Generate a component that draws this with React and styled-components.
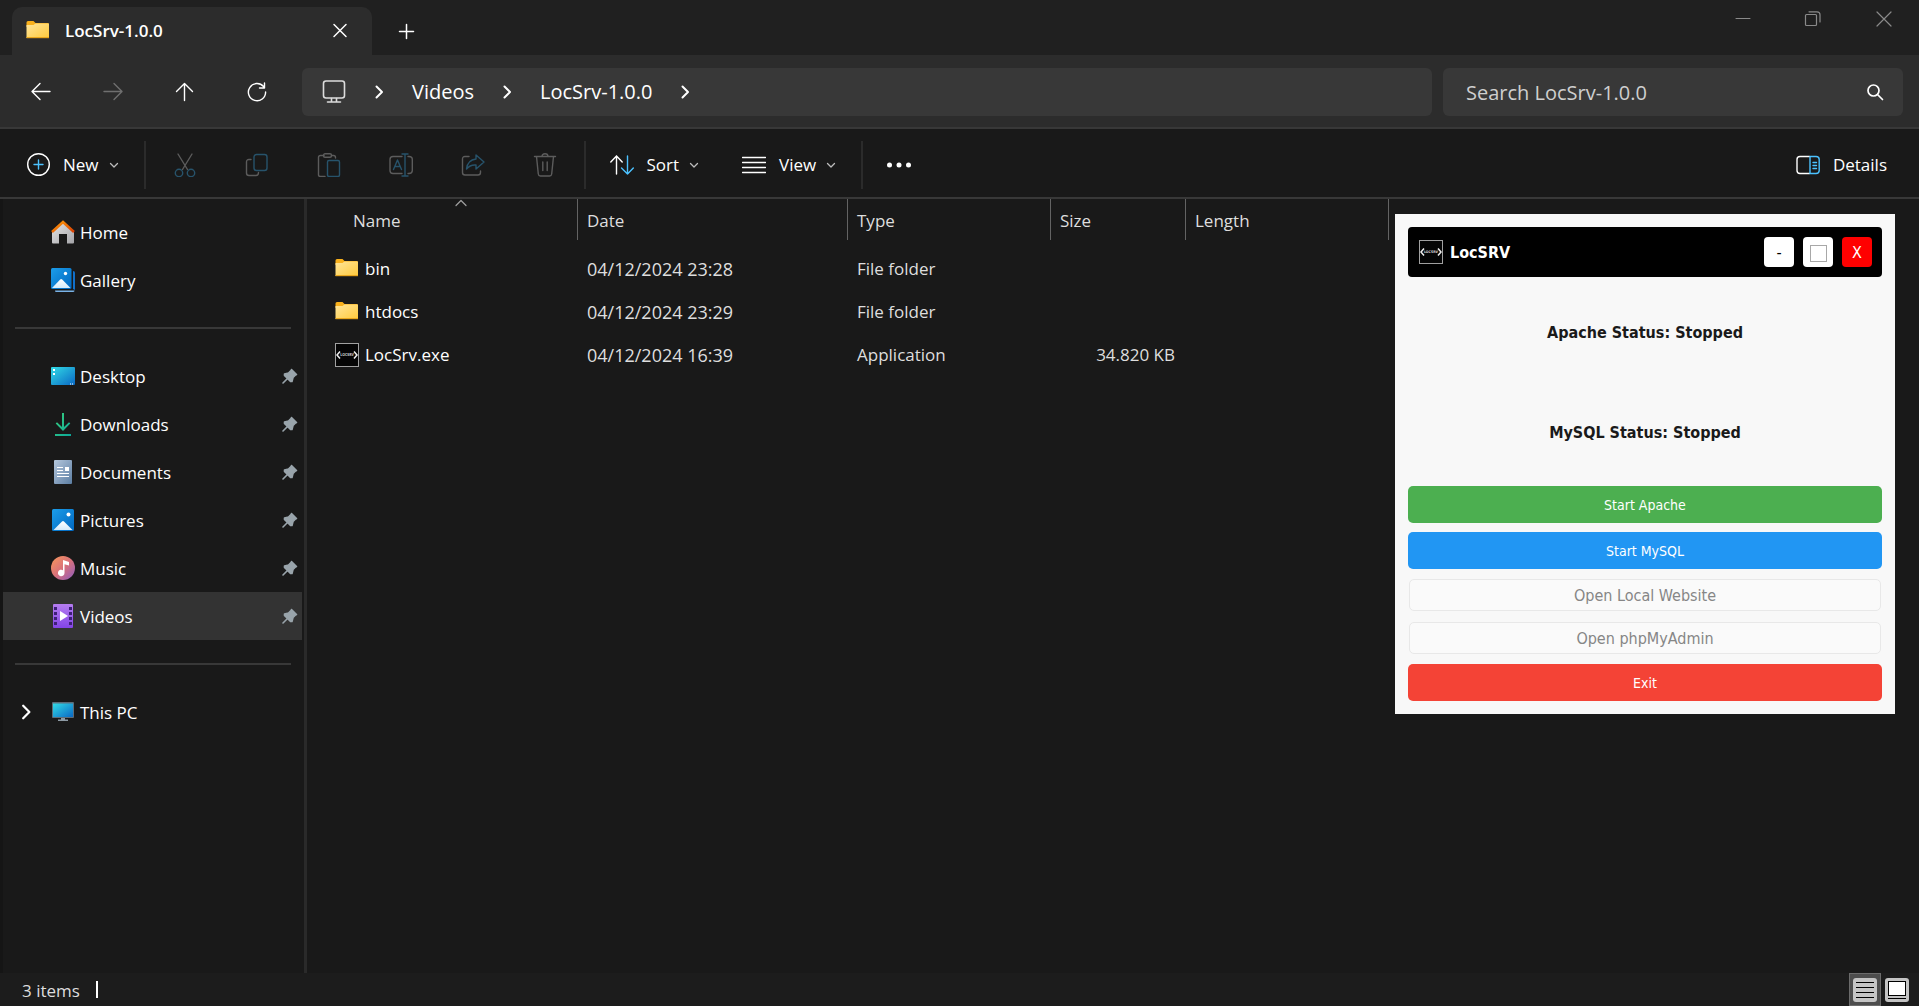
import { useState } from 'react'
import styled, { createGlobalStyle } from 'styled-components'

const colors = {
  titleBar: '#202020',
  navBar: '#2c2c2c',
  field: '#383838',
  background: '#191919',
  statusBar: '#1c1c1c',
  border: '#383838',
  selected: '#333333',
  text: '#ffffff',
  muted: '#dedede',
  accent: '#4cc2ff',
  disabled: '#5c5c5c',
  disabledAccent: '#27536b',
}

const GlobalStyle = createGlobalStyle`
  * {
    box-sizing: border-box;
  }

  body {
    margin: 0;
    background: ${colors.background};
  }

  button,
  input {
    font: inherit;
    color: inherit;
    border: none;
    background: none;
    padding: 0;
  }
`

const Explorer = styled.div`
  position: relative;
  display: flex;
  flex-direction: column;
  min-height: 100vh;
  overflow: hidden;
  color: ${colors.text};
  background: ${colors.background};
  font-family: 'Open Sans', 'Noto Sans', sans-serif;
  font-size: 17px;
  line-height: 24px;
`

const Icon = styled.svg`
  flex: none;
  display: block;
  width: ${({ $size }) => $size || 24}px;
  height: ${({ $size }) => $size || 24}px;
  fill: none;
  stroke: ${({ $color }) => $color || 'currentColor'};
  stroke-width: ${({ $stroke }) => $stroke || 1.4};
  stroke-linecap: round;
  stroke-linejoin: round;
`

const Picture = styled.svg`
  flex: none;
  display: block;
  width: 24px;
  height: 24px;
`

/* Title bar */

const TitleBar = styled.header`
  display: flex;
  align-items: flex-end;
  height: 55px;
  padding-left: 12px;
  background: ${colors.titleBar};
`

const Tab = styled.div`
  display: flex;
  align-items: center;
  gap: 15px;
  width: 360px;
  height: 48px;
  padding: 0 20px 0 14px;
  border-radius: 10px 10px 0 0;
  background: ${colors.navBar};
`

const TabTitle = styled.h1`
  flex: 1;
  margin: 0;
  font-size: 17px;
  font-weight: 600;
`

const TabButton = styled.button`
  display: flex;
  align-items: center;
  justify-content: center;
  width: 24px;
  height: 48px;
`

const NewTab = styled(TabButton)`
  margin-left: 22px;
`

const WindowControls = styled.div`
  display: flex;
  align-self: flex-start;
  margin-left: auto;
  color: #8a8a8a;
`

const WindowControl = styled.button`
  display: flex;
  align-items: center;
  justify-content: center;
  width: 71px;
  height: 37px;
`

/* Navigation bar */

const NavBar = styled.nav`
  display: flex;
  align-items: center;
  height: 74px;
  padding: 2px 16px 0 5px;
  border-bottom: 2px solid ${colors.border};
  background: ${colors.navBar};
`

const NavButton = styled.button`
  display: flex;
  align-items: center;
  justify-content: center;
  width: 72px;
  height: 48px;

  &:disabled {
    color: #6f6f6f;
  }
`

const Field = styled.div`
  display: flex;
  align-items: center;
  height: 48px;
  border-radius: 6px;
  background: ${colors.field};
  font-size: 20px;
`

const Address = styled(Field)`
  flex: 1;
  gap: 25px;
  margin: 0 11px 0 9px;
  padding: 0 20px;
`

const Crumb = styled.button`
  line-height: 48px;
`

const Search = styled(Field)`
  flex: 0 1 460px;
  padding: 0 16px 0 23px;

  input {
    flex: 1;
    min-width: 0;
    height: 48px;
    outline: none;
  }

  input::placeholder {
    color: #cfcfcf;
    opacity: 1;
  }
`

/* Command bar */

const CommandBar = styled.div`
  display: flex;
  align-items: center;
  height: 70px;
  padding: 4px 11px 0 5px;
  border-bottom: 2px solid ${colors.border};
`

const Command = styled.button`
  display: flex;
  align-items: center;
  gap: 9px;
  height: 48px;
  margin-left: ${({ $end }) => ($end ? 'auto' : 0)};
  padding: 0 21px;

  svg:first-child {
    margin-right: 4px;
  }
`

const IconCommand = styled.button`
  display: flex;
  align-items: center;
  justify-content: center;
  width: ${({ $narrow }) => ($narrow ? 66 : 72)}px;
  height: 48px;
`

const CommandDivider = styled.span`
  width: 2px;
  height: 48px;
  margin: 0 3px;
  background: #2b2b2b;
`

/* Body */

const Body = styled.main`
  display: flex;
  flex: 1;
`

const Sidebar = styled.aside`
  flex: none;
  width: 307px;
  padding: 9px 2px 9px 0;
  border-left: 3px solid #151515;
  border-right: 3px solid #2a2a2a;
`

const Place = styled.a`
  display: flex;
  align-items: center;
  gap: 5px;
  height: 48px;
  padding: 0 4px 0 10px;
  color: inherit;
  text-decoration: none;
  background: ${({ $selected }) => ($selected ? colors.selected : 'none')};
`

const Expander = styled.span`
  flex: none;
  display: flex;
  justify-content: center;
  width: 33px;
  padding-right: 7px;
`

const PlaceName = styled.span`
  flex: 1;
  padding-top: 2px;
`

const SidebarDivider = styled.hr`
  height: 2px;
  margin: 23px 11px 23px 12px;
  border: none;
  background: ${colors.border};
`

const FileTable = styled.table`
  flex: 1;
  align-self: flex-start;
  table-layout: fixed;
  width: 100%;
  border-collapse: separate;
  border-spacing: 0;
  color: ${colors.muted};
  text-align: left;

  tbody::before {
    content: '';
    display: block;
    height: 7px;
  }
`

const HeadCell = styled.th`
  width: ${({ $width }) => $width}px;
  height: 41px;
  padding: 3px 0 0 ${({ $first }) => ($first ? 46 : 9)}px;
  border-right: 1px solid #636363;
  font-weight: 400;
`

const HeadLast = styled.th`
  padding: 0;
`

const SortMark = styled(Icon)`
  position: absolute;
  top: 197px;
  left: 454px;
`

const Cell = styled.td`
  height: 43px;
  padding: 0 11px 0 9px;
  text-align: ${({ $right }) => ($right ? 'right' : 'left')};
  font-size: ${({ $large }) => ($large ? 18 : 17)}px;
  white-space: nowrap;
`

const FileName = styled.div`
  display: flex;
  align-items: center;
  gap: 6px;
  padding-left: 19px;
  color: ${colors.text};
`

/* Status bar */

const StatusBar = styled.footer`
  display: flex;
  align-items: center;
  height: 33px;
  padding: 0 6px 0 22px;
  background: ${colors.statusBar};
  color: ${colors.muted};
`

const StatusText = styled.span`
  padding-top: 3px;
`

const StatusMark = styled.span`
  width: 2px;
  height: 17px;
  margin-left: 16px;
  background: #ffffff;
`

const ViewButton = styled.button`
  display: flex;
  align-items: center;
  justify-content: center;
  width: 32px;
  height: 33px;
  margin-left: ${({ $first }) => ($first ? 'auto' : 0)};
  border: ${({ $active }) => ($active ? '1px solid #6b6b6b' : 'none')};
  background: ${({ $active }) => ($active ? '#4d4d4d' : 'none')};
`

/* LocSRV window, floating over the explorer */

const ServerWindow = styled.section`
  position: absolute;
  top: 214px;
  right: 24px;
  display: flex;
  flex-direction: column;
  gap: 9px;
  width: 500px;
  padding: 13px;
  background: #f8f8f8;
  color: #1a1a1a;
  font-family: 'DejaVu Sans Condensed', 'DejaVu Sans', sans-serif;
  font-size: 16px;
  line-height: 20px;
`

const ServerHeader = styled.header`
  display: flex;
  align-items: center;
  gap: 7px;
  height: 50px;
  padding: 0 10px 0 11px;
  border-radius: 4px;
  background: #000000;
`

const ServerTitle = styled.h2`
  flex: 1;
  margin: 0;
  padding-top: 2px;
  color: #ffffff;
  font-size: 16px;
  font-weight: 700;
`

const ServerControls = styled.div`
  display: flex;
  gap: 9px;
`

const ServerControl = styled.button`
  display: flex;
  align-items: center;
  justify-content: center;
  width: 30px;
  height: 30px;
  padding-top: 2px;
  border-radius: 4px;
  background: ${({ $danger }) => ($danger ? '#ff0000' : '#ffffff')};
  color: ${({ $danger }) => ($danger ? '#ffffff' : '#000000')};
`

const Square = styled.span`
  width: 17px;
  height: 17px;
  border: 1px solid #a8a8a8;
`

const Status = styled.p`
  margin: 0;
  padding-top: 2px;
  font-weight: 700;
  line-height: 89px;
  text-align: center;
`

const ServerButton = styled.button`
  height: 37px;
  border-radius: 5px;
  background: ${({ $color }) => $color};
  color: #ffffff;
  font-size: 14px;

  &:disabled {
    height: 32px;
    margin: 1px;
    padding-top: 2px;
    border: 1px solid #e8e8e8;
    background: #fafafa;
    color: #868686;
    font-size: 16px;
  }
`

function Chevron({ size = 16 }) {
  return (
    <Icon viewBox="0 0 16 16" $size={size} $stroke={2} aria-hidden="true">
      <path d="M5.500 2.500L11 8l-5.500 5.500" />
    </Icon>
  )
}

function DownChevron() {
  return (
    <Icon viewBox="0 0 12 12" $size={12} $stroke={1.3} $color="#bdbdbd" aria-hidden="true">
      <path d="M2.500 4.500L6 8l3.500-3.500" />
    </Icon>
  )
}

function FolderIcon() {
  return (
    <Picture viewBox="0 0 24 24" aria-hidden="true">
      <defs>
        <linearGradient id="folder" x1="0" y1="0" x2="1" y2="1">
          <stop offset="0" stopColor="#ffe59a" />
          <stop offset="1" stopColor="#ffca3c" />
        </linearGradient>
      </defs>
      <path d="M0.500 3.500Q0.500 2 2 2H7.500L9.500 4H22.500V8H0.500z" fill="#f9b01b" />
      <path d="M0.500 6h7L9.500 4.500H23V19H0.500z" fill="url(#folder)" />
      <path d="M0.500 18H23v1.200H0.500z" fill="#e9a61c" />
    </Picture>
  )
}

function LocSrvIcon() {
  return (
    <Picture viewBox="0 0 24 24" aria-hidden="true">
      <rect x="0.500" y="0.500" width="23" height="23" fill="#050505" stroke="#a0a0a0" />
      <path
        d="M5 8.500L2 12l3 3.500M19 8.500l3 3.500-3 3.500"
        fill="none"
        stroke="#f0f0f0"
        strokeWidth="1.500"
      />
      <text x="12" y="13.200" fontSize="3.500" fontWeight="700" fill="#d8d8d8" textAnchor="middle">
        LOCSRV
      </text>
    </Picture>
  )
}

function HomeIcon() {
  return (
    <Picture viewBox="0 0 24 24" aria-hidden="true">
      <defs>
        <linearGradient id="wall" x1="0" y1="0" x2="1" y2="1">
          <stop offset="0" stopColor="#e6e6e6" />
          <stop offset="1" stopColor="#a4a4a8" />
        </linearGradient>
        <linearGradient id="roof" x1="0" y1="0" x2="1" y2="1">
          <stop offset="0" stopColor="#ff9f0a" />
          <stop offset="1" stopColor="#d83b01" />
        </linearGradient>
      </defs>
      <path d="M1 11L12 2l11 9v11.500q0 1-1 1h-6V14H8v9.500H2q-1 0-1-1z" fill="url(#wall)" />
      <path d="M1 12L12 2l11 10" fill="none" stroke="url(#roof)" strokeWidth="2.600" />
    </Picture>
  )
}

function PictureGradient() {
  return (
    <defs>
      <linearGradient id="sky" x1="0" y1="0" x2="1" y2="1">
        <stop offset="0" stopColor="#1c9de9" />
        <stop offset="1" stopColor="#0067c0" />
      </linearGradient>
      <linearGradient id="hill" x1="0" y1="0" x2="0" y2="1">
        <stop offset="0" stopColor="#ffffff" />
        <stop offset="1" stopColor="#d4ebfb" />
      </linearGradient>
    </defs>
  )
}

function GalleryIcon() {
  return (
    <Picture viewBox="0 0 24 24" aria-hidden="true">
      <PictureGradient />
      <path d="M22 3q2 0 2 1.500V22l-2-1z" fill="#1170c9" />
      <path d="M4 22.500h19.500q0 1.500-1.500 1.500H5q-1 0-1-1.500z" fill="#79b3e8" />
      <rect width="20.500" height="21" rx="1.500" fill="url(#sky)" />
      <path d="M1 20l8.200-8.500q1-1 2 0L19.500 20z" fill="url(#hill)" />
      <circle cx="14.500" cy="5.500" r="1.700" fill="#ffffff" />
    </Picture>
  )
}

function PicturesIcon() {
  return (
    <Picture viewBox="0 0 24 24" aria-hidden="true">
      <PictureGradient />
      <rect x="1" y="1" width="22" height="22" rx="1.500" fill="url(#sky)" />
      <path d="M2.500 22l8.500-8.500q1-1 2 0l8.500 8.500z" fill="url(#hill)" />
      <circle cx="17.500" cy="6.500" r="2" fill="#ffffff" />
    </Picture>
  )
}

function DesktopIcon() {
  return (
    <Picture viewBox="0 0 24 24" aria-hidden="true">
      <defs>
        <linearGradient id="desk" x1="0" y1="0" x2="1" y2="1">
          <stop offset="0" stopColor="#32dbe6" />
          <stop offset="1" stopColor="#0a68c4" />
        </linearGradient>
      </defs>
      <rect y="3" width="24" height="18" rx="1" fill="url(#desk)" />
      <path d="M2 5h2v2H2zM2 9h2v2H2z" fill="#ffffff" />
      <path d="M19 19.500h1v1h-1zM21 19.500h1v1h-1z" fill="#ffffff" />
    </Picture>
  )
}

function DownloadsIcon() {
  return (
    <Picture viewBox="0 0 24 24" aria-hidden="true">
      <defs>
        <linearGradient id="arrow" x1="0" y1="0" x2="1" y2="1">
          <stop offset="0" stopColor="#3bd17c" />
          <stop offset="1" stopColor="#0ba69a" />
        </linearGradient>
      </defs>
      <path
        d="M11 1h2v14l5-4.700 1.300 1.300L12 19l-7.300-7.400L6 10.300l5 4.700zM4 22h16v2H4z"
        fill="url(#arrow)"
      />
    </Picture>
  )
}

function DocumentsIcon() {
  return (
    <Picture viewBox="0 0 24 24" aria-hidden="true">
      <defs>
        <linearGradient id="paper" x1="0" y1="0" x2="1" y2="1">
          <stop offset="0" stopColor="#b5c7dc" />
          <stop offset="1" stopColor="#5c7ea3" />
        </linearGradient>
      </defs>
      <rect x="3" width="18" height="24" rx="1" fill="url(#paper)" />
      <path d="M6 7h6v1H6zM6 10h6v1H6zM6 13h12v1H6zM6 16h12v1H6zM14 7h4v4h-4z" fill="#ffffff" />
    </Picture>
  )
}

function MusicIcon() {
  return (
    <Picture viewBox="0 0 24 24" aria-hidden="true">
      <defs>
        <linearGradient id="disc" x1="0" y1="0" x2="1" y2="1">
          <stop offset="0.100" stopColor="#f39160" />
          <stop offset="0.500" stopColor="#d9717a" />
          <stop offset="1" stopColor="#8b5cc2" />
        </linearGradient>
      </defs>
      <circle cx="12" cy="12" r="12" fill="url(#disc)" />
      <path d="M12 4l6 2v3.500l-4.500-1.200V17a3.300 3.300 0 1 1-1.500-2.800z" fill="#ffffff" />
    </Picture>
  )
}

function VideosIcon() {
  return (
    <Picture viewBox="0 0 24 24" aria-hidden="true">
      <defs>
        <linearGradient id="film" x1="0" y1="0" x2="0" y2="1">
          <stop offset="0" stopColor="#b57df0" />
          <stop offset="1" stopColor="#8344e6" />
        </linearGradient>
      </defs>
      <rect x="2" width="20" height="24" rx="1" fill="url(#film)" />
      <path
        d="M3 3h3v3H3zM3 8h3v3H3zM3 13h3v3H3zM3 18h3v3H3zM18 3h3v3h-3zM18 8h3v3h-3zM18 13h3v3h-3zM18 18h3v3h-3z"
        fill="#3e1f78"
      />
      <path d="M9 7l8 5-8 5z" fill="#ffffff" />
    </Picture>
  )
}

function ComputerIcon() {
  return (
    <Picture viewBox="0 0 24 24" aria-hidden="true">
      <rect x="1" y="2" width="22" height="16" rx="1" fill="#5d6c78" />
      <rect x="2" y="3.500" width="20" height="13.500" fill="url(#desk)" />
      <path d="M10 18h4v1.500h3V21H7v-1.500h3z" fill="#8d9aa4" />
    </Picture>
  )
}

function PinIcon() {
  return (
    <Icon viewBox="0 0 16 16" $size={16} $color="#99a4ab" $stroke={1.6} aria-label="Pinned">
      <path
        d="M9.500 1.500L14.500 6.500 13.500 7 11 9.500 10 13.500 8.500 13.500 2.500 7.500 2.500 6 6.500 5 9 2.500z"
        fill="#99a4ab"
      />
      <path d="M5.500 10.500L1 15" />
    </Icon>
  )
}

const quickAccess = [
  { name: 'Desktop', icon: DesktopIcon },
  { name: 'Downloads', icon: DownloadsIcon },
  { name: 'Documents', icon: DocumentsIcon },
  { name: 'Pictures', icon: PicturesIcon },
  { name: 'Music', icon: MusicIcon },
  { name: 'Videos', icon: VideosIcon },
]

const files = [
  { name: 'bin', icon: FolderIcon, date: '04/12/2024 23:28', type: 'File folder', size: '' },
  { name: 'htdocs', icon: FolderIcon, date: '04/12/2024 23:29', type: 'File folder', size: '' },
  {
    name: 'LocSrv.exe',
    icon: LocSrvIcon,
    date: '04/12/2024 16:39',
    type: 'Application',
    size: '34.820 KB',
  },
]

function PlaceLink({ name, icon: PlaceIcon, pinned, selected, expandable, onClick }) {
  return (
    <Place href="#" $selected={selected} onClick={onClick}>
      <Expander>{expandable && <Chevron size={18} />}</Expander>
      <PlaceIcon />
      <PlaceName>{name}</PlaceName>
      {pinned && <PinIcon />}
    </Place>
  )
}

function Commands() {
  const gray = colors.disabled
  const blue = colors.disabledAccent

  return (
    <CommandBar role="toolbar">
      <Command>
        <Icon viewBox="0 0 24 24">
          <circle cx="12.500" cy="11.500" r="10.800" />
          <path d="M12.500 7v9M8 11.500h9" stroke={colors.accent} />
        </Icon>
        New
        <DownChevron />
      </Command>
      <CommandDivider />
      <IconCommand aria-label="Cut" disabled>
        <Icon viewBox="0 0 24 24" $color={gray}>
          <path d="M5 1l9.500 15.500M19 1L9.500 16.500" />
          <g stroke={blue}>
            <circle cx="6" cy="20" r="3.700" />
            <circle cx="18" cy="20" r="3.700" />
          </g>
        </Icon>
      </IconCommand>
      <IconCommand aria-label="Copy" disabled>
        <Icon viewBox="0 0 24 24" $color={gray}>
          <path d="M6 6.500H4Q1.500 6.500 1.500 9v11q0 2.500 2.500 2.500h7q2.500 0 2.500-3" />
          <rect x="9" y="1.500" width="13" height="16" rx="2.500" stroke={blue} />
        </Icon>
      </IconCommand>
      <IconCommand aria-label="Paste" disabled>
        <Icon viewBox="0 0 24 24" $color={gray}>
          <path d="M7 2.500H3.500Q1.500 2.500 1.500 4.500V22q0 1.500 2 1.500H8M14.500 2.500h2q2 0 2 2V5" />
          <rect x="6.500" y="0.800" width="8" height="3.500" rx="1.500" />
          <rect x="10.500" y="7.500" width="12" height="16" rx="1.500" stroke={blue} />
        </Icon>
      </IconCommand>
      <IconCommand aria-label="Rename" disabled>
        <Icon viewBox="0 0 24 24" $color={gray}>
          <path d="M13 3.500H4Q1 3.500 1 6.500v11q0 3 3 3h9M19 3.500h1q3.300 0 3.300 3v11q0 3-3.300 3h-1" />
          <path d="M4.500 16.500L8.500 7l4 9.500M6 13.500h5M16 1v22M13 1h6M13 23h6" stroke={blue} />
        </Icon>
      </IconCommand>
      <IconCommand aria-label="Share" disabled>
        <Icon viewBox="0 0 24 24" $color={gray}>
          <path d="M8 3.500H4Q1.500 3.500 1.500 6v13.500q0 2.500 2.500 2.500h13q2.500 0 2.500-2.500V18" />
          <path d="M15 2l8 7-8 7v-4q-6-.5-9.500 4Q6.500 7 15 6z" stroke={blue} />
        </Icon>
      </IconCommand>
      <IconCommand aria-label="Delete" disabled>
        <Icon viewBox="0 0 24 24" $color={gray}>
          <path d="M1.500 3.500h21M3.500 3.500l1.800 17.500q.3 2 2 2h9.400q1.700 0 2-2L20.500 3.500M9 3.500Q9 .8 12 .8t3 2.700M9.800 9v8.500M14.200 9v8.500" />
        </Icon>
      </IconCommand>
      <CommandDivider />
      <Command>
        <Icon viewBox="0 0 24 24">
          <path d="M6.500 21V3M.8 9l5.700-6 5.700 6" />
          <path d="M17.500 3v18M11.500 15l6 6 5.800-6" stroke={colors.accent} />
        </Icon>
        Sort
        <DownChevron />
      </Command>
      <Command>
        <Icon viewBox="0 0 24 24">
          <path d="M.5 4.500h23M.5 9.500h23M.5 14.500h23M.5 19.500h23" />
        </Icon>
        View
        <DownChevron />
      </Command>
      <CommandDivider />
      <IconCommand aria-label="See more" $narrow>
        <Icon viewBox="0 0 24 24">
          <g fill="currentColor" stroke="none">
            <circle cx="2.500" cy="12" r="2.500" />
            <circle cx="12" cy="12" r="2.500" />
            <circle cx="21.500" cy="12" r="2.500" />
          </g>
        </Icon>
      </IconCommand>
      <Command $end>
        <Icon viewBox="0 0 24 24">
          <path d="M13.500 3.500H4q-3 0-3 3v11q0 3 3 3h9.500" />
          <path
            d="M14 3.500h6q3.200 0 3.200 3v11q0 3-3.200 3h-6zM17 9.500h3.500M17 12.500h3.500M17 15.500h3.500"
            stroke={colors.accent}
          />
        </Icon>
        Details
      </Command>
    </CommandBar>
  )
}

function LocSrvWindow() {
  return (
    <ServerWindow>
      <ServerHeader>
        <LocSrvIcon />
        <ServerTitle>LocSRV</ServerTitle>
        <ServerControls>
          <ServerControl>-</ServerControl>
          <ServerControl aria-label="Maximize">
            <Square />
          </ServerControl>
          <ServerControl $danger>X</ServerControl>
        </ServerControls>
      </ServerHeader>
      <Status>Apache Status: Stopped</Status>
      <Status>MySQL Status: Stopped</Status>
      <ServerButton $color="#4caf50">Start Apache</ServerButton>
      <ServerButton $color="#2196f3">Start MySQL</ServerButton>
      <ServerButton disabled>Open Local Website</ServerButton>
      <ServerButton disabled>Open phpMyAdmin</ServerButton>
      <ServerButton $color="#f44336">Exit</ServerButton>
    </ServerWindow>
  )
}

function App() {
  const [currentPlace, setCurrentPlace] = useState('Videos')
  const [query, setQuery] = useState('')

  return (
    <Explorer>
      <GlobalStyle />
      <TitleBar>
        <Tab>
          <FolderIcon />
          <TabTitle>LocSrv-1.0.0</TabTitle>
          <TabButton aria-label="Close tab">
            <Icon viewBox="0 0 24 24" $stroke={1.5}>
              <path d="M6 5.500l12 12M18 5.500l-12 12" />
            </Icon>
          </TabButton>
        </Tab>
        <NewTab aria-label="New tab">
          <Icon viewBox="0 0 24 24" $stroke={1.5}>
            <path d="M12.500 5.500v14M5.500 12.500h14" />
          </Icon>
        </NewTab>
        <WindowControls>
          <WindowControl aria-label="Minimize">
            <Icon viewBox="0 0 24 24" $stroke={1}>
              <path d="M6 11.500h14" />
            </Icon>
          </WindowControl>
          <WindowControl aria-label="Restore">
            <Icon viewBox="0 0 24 24" $stroke={1.2}>
              <rect x="4.500" y="7.500" width="11" height="11" rx="1" />
              <path d="M8 4.800h8q3 0 3 3V15" />
            </Icon>
          </WindowControl>
          <WindowControl aria-label="Close">
            <Icon viewBox="0 0 24 24" $stroke={1.2}>
              <path d="M5 5l14 14M19 5L5 19" />
            </Icon>
          </WindowControl>
        </WindowControls>
      </TitleBar>

      <NavBar>
        <NavButton aria-label="Back">
          <Icon viewBox="0 0 24 24">
            <path d="M21 11.500H3.500M11 3.500l-8 8 8 8" />
          </Icon>
        </NavButton>
        <NavButton aria-label="Forward" disabled>
          <Icon viewBox="0 0 24 24">
            <path d="M3 11.500h17.500M13 3.500l8 8-8 8" />
          </Icon>
        </NavButton>
        <NavButton aria-label="Up">
          <Icon viewBox="0 0 24 24">
            <path d="M11.500 20.500V3.500M3.500 11.500l8-8 8 8" />
          </Icon>
        </NavButton>
        <NavButton aria-label="Refresh">
          <Icon viewBox="0 0 24 24">
            <path d="M18.500 6.500A8.600 8.600 0 1 0 20.600 12M19.500 3v5h-5" />
          </Icon>
        </NavButton>
        <Address>
          <Icon viewBox="0 0 24 24" $color="#dcdcdc" $stroke={1.6}>
            <rect x="1.500" y="1" width="21" height="17" rx="2.500" />
            <path d="M9.500 18.500v3M14.500 18.500v3M5.500 22h13" />
          </Icon>
          <Chevron />
          <Crumb>Videos</Crumb>
          <Chevron />
          <Crumb>LocSrv-1.0.0</Crumb>
          <Chevron />
        </Address>
        <Search>
          <input
            type="search"
            aria-label="Search LocSrv-1.0.0"
            placeholder="Search LocSrv-1.0.0"
            value={query}
            onChange={(e) => setQuery(e.target.value)}
          />
          <Icon viewBox="0 0 24 24" $stroke={1.7}>
            <circle cx="10.500" cy="10.500" r="5.500" />
            <path d="M14.500 14.500l5 5" />
          </Icon>
        </Search>
      </NavBar>

      <Commands />

      <Body>
        <Sidebar>
          <PlaceLink name="Home" icon={HomeIcon} onClick={() => setCurrentPlace('Home')} />
          <PlaceLink name="Gallery" icon={GalleryIcon} onClick={() => setCurrentPlace('Gallery')} />
          <SidebarDivider />
          {quickAccess.map(({ name, icon }) => (
            <PlaceLink
              key={name}
              name={name}
              icon={icon}
              pinned
              selected={name === currentPlace}
              onClick={() => setCurrentPlace(name)}
            />
          ))}
          <SidebarDivider />
          <PlaceLink name="This PC" icon={ComputerIcon} expandable />
        </Sidebar>

        <FileTable>
          <thead>
            <tr>
              <HeadCell $width={271} $first>
                Name
              </HeadCell>
              <HeadCell $width={270}>Date</HeadCell>
              <HeadCell $width={203}>Type</HeadCell>
              <HeadCell $width={135}>Size</HeadCell>
              <HeadCell $width={203}>Length</HeadCell>
              <HeadLast />
            </tr>
          </thead>
          <tbody>
            {files.map(({ name, icon: FileIcon, date, type, size }) => (
              <tr key={name}>
                <Cell>
                  <FileName>
                    <FileIcon />
                    {name}
                  </FileName>
                </Cell>
                <Cell $large>{date}</Cell>
                <Cell>{type}</Cell>
                <Cell $right>{size}</Cell>
                <Cell />
                <Cell />
              </tr>
            ))}
          </tbody>
        </FileTable>
        <SortMark viewBox="0 0 14 14" $size={14} $stroke={1.2} $color="#a0a0a0">
          <path d="M2 8.500l5-5 5 5" />
        </SortMark>
      </Body>

      <StatusBar>
        <StatusText>3 items</StatusText>
        <StatusMark />
        <ViewButton aria-label="Details view" $first $active>
          <Picture viewBox="0 0 24 24">
            <rect width="24" height="24" rx="3" fill="#c4c4c4" />
            <path d="M3 4.500h18M3 9.500h18M3 14.500h18M3 19.500h18" stroke="#000000" />
          </Picture>
        </ViewButton>
        <ViewButton aria-label="Large icons view">
          <Picture viewBox="0 0 24 24">
            <rect width="24" height="24" rx="3" fill="#c4c4c4" />
            <rect x="3.500" y="3.500" width="17" height="14" fill="#ffffff" stroke="#000000" />
            <path d="M3 20.500h18" stroke="#000000" />
          </Picture>
        </ViewButton>
      </StatusBar>

      <LocSrvWindow />
    </Explorer>
  )
}

export default App
